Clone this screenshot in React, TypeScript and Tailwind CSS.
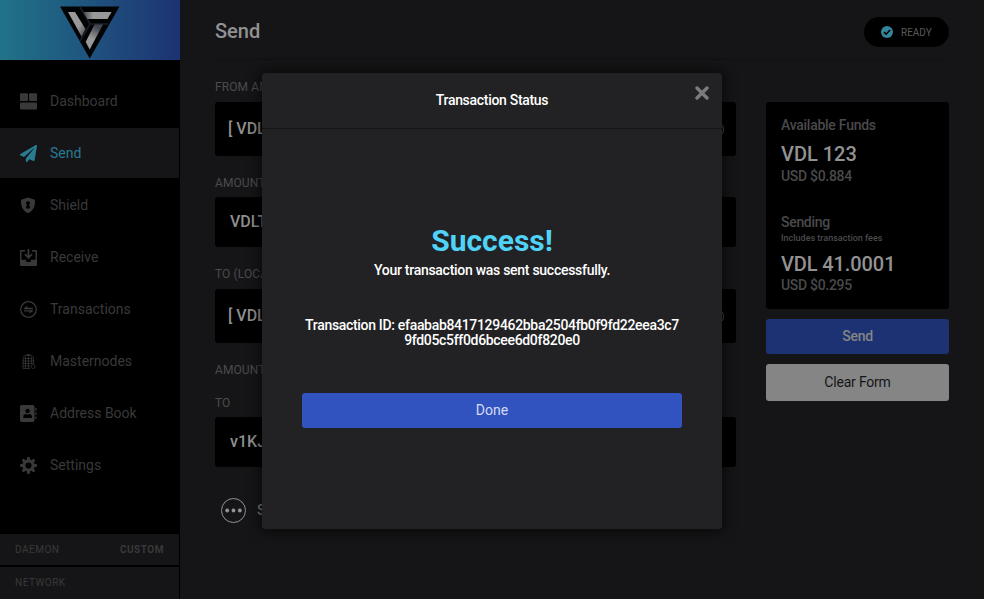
import { FaPaperPlane } from 'react-icons/fa';
import type { ReactNode } from 'react';

const DashboardIcon = () => (
  <svg width="17" height="17" viewBox="0 0 17 17" fill="currentColor">
    <rect x="0" y="0.3" width="8" height="7.7" rx="1" />
    <rect x="9" y="0.3" width="8" height="7.7" rx="1" />
    <rect x="0" y="9.5" width="17" height="7" rx="1" />
  </svg>
);

const ShieldIcon = () => (
  <svg width="17" height="17" viewBox="0 0 17 17">
    <path fill="currentColor" d="M8 .6 14.9 2.700c.4 5.800-1 10.800-6.900 13.600C2.100 13.500.700 8.500 1.100 2.700Z" />
    <path fill="#000" d="M8 4.200a2 2 0 0 1 1.300 3.500L9 8.400l.9.800v2.300H6.100V9.200l.9-.8-.3-.7A2 2 0 0 1 8 4.200Z" />
  </svg>
);

const ReceiveIcon = () => (
  <svg width="17" height="17" viewBox="0 0 17 17">
    <path fill="currentColor" d="M0 2a1 1 0 0 1 1-1h4v1.500H1.500v8.200h4.700v2.300h4.600v-2.300h4.700V2.500H12V1h4a1 1 0 0 1 1 1v14a1 1 0 0 1-1 1H1a1 1 0 0 1-1-1Z" />
    <path fill="none" stroke="currentColor" strokeWidth="1.700" d="M8.500 0v8.500M4.900 5.200l3.600 3.500 3.600-3.500" />
  </svg>
);

const TransactionsIcon = () => (
  <svg width="17" height="17" viewBox="0 0 17 17" fill="none" stroke="currentColor">
    <circle cx="8.500" cy="8.500" r="7.800" strokeWidth="1.300" />
    <path strokeWidth="1.300" d="M4.300 7.500h8.600M4.100 9.800h8.700" />
    <path fill="currentColor" stroke="none" d="M3.700 8.100 7.300 4.600v3.500ZM13.300 9.200 9.700 12.700V9.200Z" />
  </svg>
);

const MasternodesIcon = () => (
  <svg width="17" height="17" viewBox="0 0 17 17" fill="none" stroke="currentColor" strokeWidth=".7">
    <path d="M2.500 4.500 5 2.500h6.500L14 4.500M3.500 5.500h10M6.500 1.500h4M8.500 1v15M5.500 3.500v12M11.500 3.500v7M2.500 8h12M2.500 10.500h11M2.500 13h8M3 8v7.500h7" />
    <path d="M3.500 5.500v2.500M13.500 5.500v5" />
    <circle cx="13" cy="13.500" r="2" />
  </svg>
);

const AddressIcon = () => (
  <svg width="17" height="17" viewBox="0 0 17 17">
    <rect width="14.500" height="17" rx="1.700" fill="currentColor" />
    <path fill="currentColor" d="M15.300 3h1.200v2.700h-1.200zM15.300 7.200h1.200v2.700h-1.200zM15.300 11.400h1.200v2.700h-1.200z" />
    <circle cx="7.600" cy="6" r="2.200" fill="#000" />
    <path fill="#000" d="M3.300 13v-1.300c0-1.700 1.300-2.700 2.600-2.700.9.700 2.500.7 3.400 0 1.300 0 2.600 1 2.600 2.700V13Z" />
  </svg>
);

const SettingsIcon = () => (
  <svg width="17" height="17" viewBox="0 0 17 17">
    <circle cx="8.500" cy="8.500" r="4.600" fill="none" stroke="currentColor" strokeWidth="3" />
    {[0, 45, 90, 135, 180, 225, 270, 315].map((angle) => (
      <path key={angle} d="M6.800 3.200 7.300.3a.5.500 0 0 1 .4-.3h1.600a.5.500 0 0 1 .4.300l.5 2.900Z" fill="currentColor" transform={`rotate(${angle} 8.500 8.500)`} />
    ))}
  </svg>
);

const Logo = () => (
  <svg width="60" height="53" viewBox="0 0 60 53">
    <defs>
      <linearGradient id="lg1" x1="0" y1="0" x2="1" y2="1">
        <stop offset=".6" stopColor="#999" />
        <stop offset="1" stopColor="#42464e" />
      </linearGradient>
      <linearGradient id="lg2" x1="1" y1="0" x2="0" y2="0">
        <stop offset=".65" stopColor="#999" />
        <stop offset="1" stopColor="#4a4d54" />
      </linearGradient>
      <linearGradient id="lg3" x1="0" y1="1" x2=".4" y2="0">
        <stop offset=".5" stopColor="#999" />
        <stop offset="1" stopColor="#42464e" />
      </linearGradient>
    </defs>
    <path d="M0 .5h59.500L29.700 52.500Z" fill="#010203" />
    <path d="m20 1 10 17M29.500 18H48M30 18 20 35" stroke="#1a2029" strokeWidth="1.500" />
    <path d="M8 6h7l10.500 17-4 7.500Z" fill="url(#lg1)" />
    <path d="M23.500 6h28l-4 7H27.500Z" fill="url(#lg2)" />
    <path d="M34.500 18.500h8.500L29.700 43.500l-4-7.500Z" fill="url(#lg3)" />
  </svg>
);

const items: { label: string; icon: ReactNode }[] = [
  { label: 'Dashboard', icon: <DashboardIcon /> },
  { label: 'Send', icon: <FaPaperPlane size={17} /> },
  { label: 'Shield', icon: <ShieldIcon /> },
  { label: 'Receive', icon: <ReceiveIcon /> },
  { label: 'Transactions', icon: <TransactionsIcon /> },
  { label: 'Masternodes', icon: <MasternodesIcon /> },
  { label: 'Address Book', icon: <AddressIcon /> },
  { label: 'Settings', icon: <SettingsIcon /> },
];

function Sidebar() {
  return (
    <aside className="flex w-[180px] shrink-0 flex-col bg-black">
      <div className="flex h-[60px] justify-center bg-linear-to-r from-[#217389] to-[#1d3272] pt-[6px]">
        <Logo />
      </div>
      <nav className="mt-4 flex flex-col gap-0.5 pr-px">
        {items.map(({ label, icon }) => (
          <div
            key={label}
            className={`flex h-[50px] items-center gap-[13px] pl-5 text-[14px] ${
              label === 'Send' ? 'bg-[#151517] text-[#297b92]' : 'text-[#393939]'
            }`}
          >
            <span className="flex w-[17px] justify-center">{icon}</span>
            <span>{label}</span>
          </div>
        ))}
      </nav>
      <footer className="mt-auto flex flex-col gap-0.5 pr-px text-[10px] tracking-[0.5px] text-[#393939]">
        <div className="flex h-[31px] items-center justify-between bg-[#151517] px-[15px]">
          <span>DAEMON</span>
          <span className="font-bold">CUSTOM</span>
        </div>
        <div className="flex h-8 items-center bg-[#151517] px-[15px] pb-px">NETWORK</div>
      </footer>
    </aside>
  );
}

function Label({ children, className = '' }: { children: ReactNode; className?: string }) {
  return <div className={`text-[12px] leading-[14px] tracking-[0.1px] text-[#4b4b4c] ${className}`}>{children}</div>;
}

function Box({ children, tall = false, className = '' }: { children: ReactNode; tall?: boolean; className?: string }) {
  return (
    <div
      className={`flex items-center rounded-[3px] bg-black text-[16px] font-medium text-[#8f8f8f] ${
        tall ? 'h-[54px] justify-between pl-[13px] pr-[12px]' : 'h-[50px] pl-[15px]'
      } ${className}`}
    >
      <span>{children}</span>
      {tall && <span className="size-[17px] rounded-full border border-[#555]" />}
    </div>
  );
}

function Main() {
  return (
    <main className="flex-1 pl-[35px] pr-[35px]">
      <header className="flex h-[60px] items-center justify-between border-b border-[#111113]">
        <h1 className="pt-0.5 text-[20px] font-medium text-[#929293]">Send</h1>
        <div className="mt-1 flex h-[30px] w-[85px] items-center rounded-full bg-black pl-[17px] text-[10px] text-[#595959]">
          <svg width="12" height="12" viewBox="0 0 12 12">
            <circle cx="6" cy="6" r="6" fill="#35859c" />
            <path d="m3 6.200 2.100 2 4-4.200" fill="none" stroke="#000" strokeWidth="1.600" />
          </svg>
          <span className="ml-2 pt-0.5">READY</span>
        </div>
      </header>
      <div className="flex gap-[30px]">
        <section className="w-[521px] pt-5">
          <Label>FROM AN ADDRESS</Label>
          <Box tall className="mt-2">[ VDL ]</Box>
          <Label className="mt-5">AMOUNT</Label>
          <Box className="mt-[7px]">VDLT</Box>
          <Label className="mt-5">TO (LOCAL)</Label>
          <Box tall className="mt-2">[ VDL ]</Box>
          <Label className="mt-5">AMOUNT</Label>
          <Label className="mt-[19px]">TO</Label>
          <Box className="mt-[7px]">v1KJ</Box>
          <div className="ml-[6px] mt-[31px] flex items-center gap-[11px] text-[14px] font-medium text-[#77777a]">
            <svg width="25" height="25" viewBox="0 0 25 25">
              <circle cx="12.500" cy="12.500" r="12" fill="none" stroke="#929293" />
              <g fill="#929293">
                <circle cx="6.200" cy="12.500" r="1.900" />
                <circle cx="12.500" cy="12.500" r="1.900" />
                <circle cx="18.800" cy="12.500" r="1.900" />
              </g>
            </svg>
            Show
          </div>
        </section>
        <section className="w-[183px] pt-[42px]">
          <div className="h-[207px] rounded-[3px] bg-black px-[15px] pt-[15px] text-[14px] leading-4 font-medium text-[#4a4a4b]">
            <div className="tracking-[-0.26px]">Available Funds</div>
            <div className="mt-[9px] text-[20px] leading-6 text-[#929293]">VDL 123</div>
            <div className="mt-[2px] tracking-[-0.3px]">USD $0.884</div>
            <div className="mt-[30px] tracking-[-0.3px]">Sending</div>
            <div className="mt-[2px] text-[9px] leading-3">Includes transaction fees</div>
            <div className="mt-[8px] text-[20px] leading-6 tracking-[-0.1px] text-[#929293]">VDL 41.0001</div>
            <div className="mt-[1px] tracking-[-0.3px]">USD $0.295</div>
          </div>
          <button className="mt-[10px] block h-[35px] w-full rounded-[3px] bg-[#1d3272] text-[14px] font-medium tracking-[-0.3px] text-[#858585]">Send</button>
          <button className="mt-[10px] block h-[37px] w-full rounded-[3px] bg-[#858585] text-[14px] tracking-[-0.2px] text-[#151517]">Clear Form</button>
        </section>
      </div>
    </main>
  );
}

function Modal() {
  return (
    <div className="absolute left-[262px] top-[73px] h-[456px] w-[460px] rounded-[3px] bg-[#222224] shadow-[0_0_12px_3px_rgba(0,0,0,0.55)]">
      <div className="relative flex h-14 items-center justify-center border-b border-[#151517] text-[14px] font-medium tracking-[-0.3px] text-white">
        Transaction Status
        <svg className="absolute right-[13px] top-[13px]" width="14" height="14" viewBox="0 0 14 14">
          <path d="m2 2 10 10M12 2 2 12" stroke="#7b7b7c" strokeWidth="3.400" strokeLinecap="round" />
        </svg>
      </div>
      <div className="flex flex-col items-center px-10 pt-[94px] text-center text-[14px] leading-[15px] font-medium text-white">
        <h2 className="text-[30px] leading-[36px] font-bold text-[#50d3f8]">Success!</h2>
        <p className="mt-1 tracking-[-0.28px]">Your transaction was sent successfully.</p>
        <p className="mt-10 whitespace-nowrap tracking-[-0.32px]">
          Transaction ID: efaabab8417129462bba2504fb0f9fd22eea3c7
          <br />
          9fd05c5ff0d6bcee6d0f820e0
        </p>
        <button className="mt-[45px] h-[35px] w-full rounded-[3px] bg-[#3053bf] text-[14px] font-normal text-[#d6dcf2]">Done</button>
      </div>
    </div>
  );
}

export default function App() {
  return (
    <div className="relative flex h-[599px] w-[984px] overflow-hidden bg-[#151517] font-['Roboto',sans-serif]">
      <Sidebar />
      <Main />
      <Modal />
    </div>
  );
}
